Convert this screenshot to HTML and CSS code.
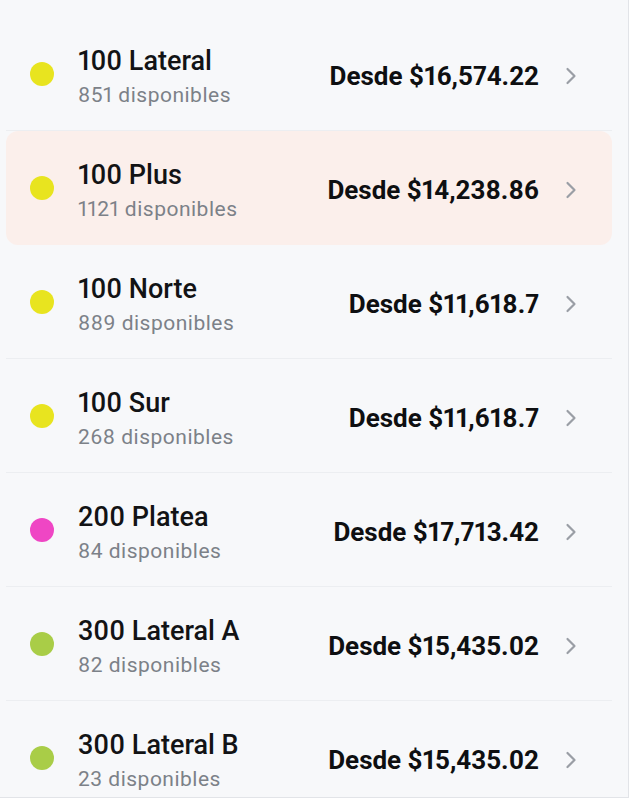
FILE: index.html
```html
<!DOCTYPE html>
<html lang="es">
<head>
<meta charset="utf-8">
<title>Secciones</title>
<link rel="stylesheet" href="styles.css">
</head>
<body>
<div class="panel">
  <ul class="list">
    <li class="row">
      <span class="dot yellow"></span>
      <div class="info"><div class="name">100 Lateral</div><div class="avail">851 disponibles</div></div>
      <div class="price">Desde $16,574.22</div>
      <svg class="chev" width="12" height="18" viewBox="0 0 12 18"><path d="M2.5 2 L9.5 9 L2.5 16" fill="none" stroke="#9a9ea5" stroke-width="2.2" stroke-linecap="round" stroke-linejoin="round"/></svg>
    </li>
    <li class="row active">
      <span class="dot yellow"></span>
      <div class="info"><div class="name">100 Plus</div><div class="avail">1121 disponibles</div></div>
      <div class="price">Desde $14,238.86</div>
      <svg class="chev" width="12" height="18" viewBox="0 0 12 18"><path d="M2.5 2 L9.5 9 L2.5 16" fill="none" stroke="#9a9ea5" stroke-width="2.2" stroke-linecap="round" stroke-linejoin="round"/></svg>
    </li>
    <li class="row">
      <span class="dot yellow"></span>
      <div class="info"><div class="name">100 Norte</div><div class="avail">889 disponibles</div></div>
      <div class="price">Desde $11,618.7</div>
      <svg class="chev" width="12" height="18" viewBox="0 0 12 18"><path d="M2.5 2 L9.5 9 L2.5 16" fill="none" stroke="#9a9ea5" stroke-width="2.2" stroke-linecap="round" stroke-linejoin="round"/></svg>
    </li>
    <li class="row">
      <span class="dot yellow"></span>
      <div class="info"><div class="name">100 Sur</div><div class="avail">268 disponibles</div></div>
      <div class="price">Desde $11,618.7</div>
      <svg class="chev" width="12" height="18" viewBox="0 0 12 18"><path d="M2.5 2 L9.5 9 L2.5 16" fill="none" stroke="#9a9ea5" stroke-width="2.2" stroke-linecap="round" stroke-linejoin="round"/></svg>
    </li>
    <li class="row">
      <span class="dot pink"></span>
      <div class="info"><div class="name">200 Platea</div><div class="avail">84 disponibles</div></div>
      <div class="price">Desde $17,713.42</div>
      <svg class="chev" width="12" height="18" viewBox="0 0 12 18"><path d="M2.5 2 L9.5 9 L2.5 16" fill="none" stroke="#9a9ea5" stroke-width="2.2" stroke-linecap="round" stroke-linejoin="round"/></svg>
    </li>
    <li class="row">
      <span class="dot lime"></span>
      <div class="info"><div class="name">300 Lateral A</div><div class="avail">82 disponibles</div></div>
      <div class="price">Desde $15,435.02</div>
      <svg class="chev" width="12" height="18" viewBox="0 0 12 18"><path d="M2.5 2 L9.5 9 L2.5 16" fill="none" stroke="#9a9ea5" stroke-width="2.2" stroke-linecap="round" stroke-linejoin="round"/></svg>
    </li>
    <li class="row">
      <span class="dot lime"></span>
      <div class="info"><div class="name">300 Lateral B</div><div class="avail">23 disponibles</div></div>
      <div class="price">Desde $15,435.02</div>
      <svg class="chev" width="12" height="18" viewBox="0 0 12 18"><path d="M2.5 2 L9.5 9 L2.5 16" fill="none" stroke="#9a9ea5" stroke-width="2.2" stroke-linecap="round" stroke-linejoin="round"/></svg>
    </li>
  </ul>
</div>
</body>
</html>
```
FILE: styles.css
```css
html, body {
  margin: 0;
  padding: 0;
  background: #ffffff;
}
body {
  font-family: Roboto, "Liberation Sans", sans-serif;
  color: #111214;
}
.panel {
  box-sizing: border-box;
  width: 629px;
  height: 798px;
  overflow: hidden;
  background: #f7f8fa;
  border-right: 1px solid #e2e4e8;
  border-bottom: 1px solid #e2e4e8;
  padding: 17px 16px 0 6px;
}
.list {
  list-style: none;
  margin: 0;
  padding: 0;
}
.row {
  box-sizing: border-box;
  height: 114px;
  display: flex;
  align-items: center;
  padding: 4px 35px 0 24px;
  border-bottom: 1px solid #eceef1;
}
.row.active {
  background: #fbefeb;
  border-radius: 12px;
  border-bottom-color: transparent;
}
.dot {
  width: 24px;
  height: 24px;
  border-radius: 50%;
  flex: none;
  margin-bottom: 4px;
}
.yellow { background: #e8e41f; }
.pink { background: #ef46c4; }
.lime { background: #a9cd47; }
.info {
  flex: 1;
  margin-left: 24px;
}
.name {
  font-size: 27px;
  line-height: 36px;
  font-weight: 500;
  color: #121315;
  font-variant-numeric: proportional-nums;
}
.avail {
  margin-top: 3px;
  font-size: 21px;
  line-height: 26px;
  letter-spacing: 0.5px;
  color: #7c8188;
  font-variant-numeric: proportional-nums;
}
.price {
  font-size: 26px;
  line-height: 32px;
  font-weight: 700;
  color: #0e0f11;
  font-variant-numeric: proportional-nums;
}
.chev {
  flex: none;
  margin-left: 26px;
}
```
